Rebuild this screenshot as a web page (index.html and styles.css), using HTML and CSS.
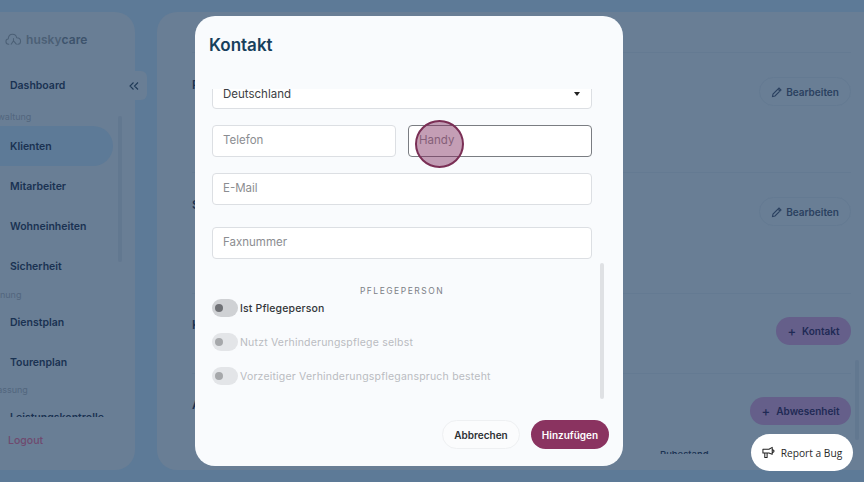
FILE: index.html
```html
<!DOCTYPE html>
<html lang="de">
<head>
<meta charset="utf-8">
<title>Kontakt</title>
<link rel="stylesheet" href="styles.css">
</head>
<body>
<div class="app">
  <aside class="sidebar">
    <div class="logo">
      <svg class="logo-icon" viewBox="0 0 18 14" fill="none" stroke="#4c6076" stroke-width="1.1" stroke-linecap="round" stroke-linejoin="round"><path d="M4 12.5C2 12.5 1 11 1 9.6 1 8 2.2 7 3.4 7 3.6 4 5.6 2 8 2c2.300 0 4 1.600 4.300 3.600C14.500 5.600 16.500 7 16.500 9.300c0 2-1.500 3.200-3 3.200"/><path d="M6.500 12.500 9 9l3 3.500M9 9V6.500"/></svg>
      <span class="logo-text">husky<b>care</b></span>
    </div>
    <a class="nav-item top">Dashboard</a>
    <button class="collapse" aria-label="Einklappen"><svg viewBox="0 0 10 8" fill="none" stroke="#1f3a57" stroke-width="1.100"><path d="M4.500.5 1 4l3.500 3.500M9 .5 5.500 4 9 7.500"/></svg></button>
    <nav class="nav-scroll">
      <div class="nav-label l1">Verwaltung</div>
      <a class="nav-item active">Klienten</a>
      <a class="nav-item">Mitarbeiter</a>
      <a class="nav-item">Wohneinheiten</a>
      <a class="nav-item">Sicherheit</a>
      <div class="nav-label l2">Planung</div>
      <a class="nav-item">Dienstplan</a>
      <a class="nav-item">Tourenplan</a>
      <div class="nav-label l3">Erfassung</div>
      <a class="nav-item">Leistungskontrolle</a>
    </nav>
    <span class="nav-thumb"></span>
    <a class="logout">Logout</a>
  </aside>

  <main class="main">
    <div class="main-scroll">
      <section class="sec s1">
        <h2>Persönliche Daten</h2>
        <button class="btn-ghost"><svg viewBox="0 0 12 12" fill="none" stroke="#2b4160" stroke-width="1.100"><path d="M1.500 10.500 2 8l6-6 2 2-6 6zM7 3l2 2"/></svg>Bearbeiten</button>
      </section>
      <section class="sec s2">
        <h2>Stammdaten</h2>
        <button class="btn-ghost"><svg viewBox="0 0 12 12" fill="none" stroke="#2b4160" stroke-width="1.100"><path d="M1.500 10.500 2 8l6-6 2 2-6 6zM7 3l2 2"/></svg>Bearbeiten</button>
      </section>
      <section class="sec s3">
        <h2>Kontakte</h2>
        <button class="btn-solid"><span class="plus">+</span>Kontakt</button>
      </section>
      <section class="sec s4">
        <h2>Abwesenheiten</h2>
        <button class="btn-solid"><span class="plus">+</span>Abwesenheit</button>
      </section>
      <div class="clipped-row">Ruhestand</div>
    </div>
    <span class="main-thumb"></span>
  </main>
</div>

<div class="modal">
  <h1 class="modal-title">Kontakt</h1>
  <div class="modal-body">
    <div class="field select"><span>Deutschland</span><i class="caret"></i></div>
    <div class="row">
      <div class="field ph">Telefon</div>
      <div class="field ph focus">Handy</div>
    </div>
    <div class="field ph email">E-Mail</div>
    <div class="field ph fax">Faxnummer</div>
    <div class="section-label">PFLEGEPERSON</div>
    <label class="toggle-row first"><span class="toggle"></span>Ist Pflegeperson</label>
    <label class="toggle-row off"><span class="toggle"></span>Nutzt Verhinderungspflege selbst</label>
    <label class="toggle-row off"><span class="toggle"></span>Vorzeitiger Verhinderungspfleganspruch besteht</label>
    <span class="modal-thumb"></span>
  </div>
  <div class="modal-foot">
    <button class="btn-cancel">Abbrechen</button>
    <button class="btn-add">Hinzufügen</button>
  </div>
</div>

<span class="click-dot"></span>

<button class="report"><svg viewBox="0 0 14 14" fill="none" stroke="#222" stroke-width="1.100" stroke-linejoin="round" stroke-linecap="round"><path d="M1 3.500h6.500L11 1.500v7.500L7.500 7.500H1zM3 7.500V12.500h2.500V7.500M11.500 4c1 .3 1.500.8 1.500 1.500S12.500 6.700 11.500 7"/></svg>Report a Bug</button>
</body>
</html>
```
FILE: styles.css
```css
* { box-sizing: border-box; }
html, body { margin: 0; height: 482px; overflow: hidden; }
body { background: #5d7a97; font-family: "Inter", "Liberation Sans", sans-serif; position: relative; }
button { font-family: inherit; border: 0; padding: 0; cursor: default; }

.app { display: flex; gap: 22px; padding-top: 12px; height: 470px; }

.sidebar { position: relative; width: 135px; flex: none; background: #697e95; border-radius: 0 20px 20px 0; display: flex; flex-direction: column; }
.logo { display: flex; align-items: center; gap: 4px; height: 56px; padding: 0 0 2px 5px; }
.logo-icon { width: 17px; height: 14px; }
.logo-text { font-size: 12px; font-weight: 600; color: #4c6076; letter-spacing: .1px; }
.logo-text b { font-weight: 600; color: #3d536c; }
.nav-item { display: flex; align-items: center; height: 40px; padding-left: 10px; font-size: 10.500px; font-weight: 600; color: #1a3252; width: 113px; }
.nav-item.top { height: 34px; }
.nav-item.active { background: #5d7a97; border-radius: 0 20px 20px 0; }
.nav-scroll { height: 315px; padding-top: 7px; overflow: hidden; display: flex; flex-direction: column; }
.nav-scroll .nav-item { flex: none; }
.nav-label { flex: none; font-size: 9px; line-height: 15px; color: #52667e; }
.nav-label.l1 { margin-left: -17px; height: 17px; }
.nav-label.l2 { margin-left: -13px; height: 15px; margin-top: 1px; }
.nav-label.l3 { margin-left: -15px; height: 15px; margin-top: 0; }
.collapse { position: absolute; left: 127px; top: 59px; width: 20px; height: 29px; background: #697e95; border-radius: 0 6px 6px 0; display: flex; align-items: center; justify-content: flex-start; padding-left: 2px; }
.collapse svg { width: 10px; height: 8px; }
.nav-thumb { position: absolute; left: 118px; top: 104px; width: 4px; height: 146px; background: #627890; border-radius: 2px; }
.logout { margin-top: 17px; padding-left: 8px; font-size: 10.500px; font-weight: 500; color: #6f4a6f; }

.main { position: relative; flex: 1; background: #697e95; border-radius: 20px 0 0 20px; }
.main-scroll { height: 442px; overflow: hidden; padding: 40px 13px 0 35px; }
.sec { display: flex; justify-content: space-between; align-items: flex-start; border-top: 1px solid #647a92; }
.sec h2 { margin: 0; font-size: 12px; font-weight: 600; color: #1a3252; }
.s1 { height: 120px; padding-top: 24px; }
.s2 { height: 121px; padding-top: 24px; }
.s3 { height: 80px; padding-top: 23px; }
.s4 { height: 70px; padding-top: 23px; }
.btn-ghost { display: flex; align-items: center; justify-content: center; gap: 3px; width: 92px; height: 29px; border: 1px solid #647a92; border-radius: 15px; background: transparent; font-size: 10px; font-weight: 600; color: #2b4160; }
.btn-ghost svg { width: 12px; height: 12px; }
.btn-solid { display: flex; align-items: center; justify-content: center; gap: 6px; height: 28px; padding: 0 11.500px; border-radius: 14px; background: #655f8a; font-size: 10px; font-weight: 600; color: #1f2a55; }
.plus { font-size: 13px; font-weight: 500; line-height: 1; }
.clipped-row { margin-left: 468px; margin-top: 6px; font-size: 9.500px; font-weight: 500; color: #1a3252; }
.main-thumb { position: absolute; right: 5px; top: 348px; width: 4px; height: 80px; background: #627890; border-radius: 2px; }

.modal { position: absolute; left: 195px; top: 16px; width: 428px; height: 450px; background: #f9fbfd; border-radius: 20px; display: flex; flex-direction: column; }
.modal-title { margin: 0; height: 73px; padding: 19px 0 0 14px; font-size: 17px; line-height: 20px; font-weight: 600; color: #17405c; }
.modal-body { position: relative; height: 311px; overflow: hidden; padding: 0 31px 0 17px; }
.field { height: 32px; background: #fff; border: 1.500px solid #dcdfe3; border-radius: 4px; display: flex; align-items: center; padding: 0 0 2px 10px; font-size: 11.500px; color: #8b8d91; }
.select { justify-content: space-between; margin-top: -12px; padding: 1px 11px 0 10px; color: #3c4043; }
.caret { width: 0; height: 0; border: 3.500px solid transparent; border-top: 4px solid #222; border-bottom: 0; }
.row { display: flex; gap: 12px; margin-top: 16px; }
.row .field { flex: 1; }
.focus { border: 1px solid #7a7d82; }
.email { margin-top: 16px; }
.fax { margin-top: 22px; }
.section-label { margin-top: 26px; text-align: center; font-size: 8.500px; line-height: 12px; letter-spacing: 1.500px; color: #7c8086; }
.toggle-row { display: flex; align-items: center; gap: 2px; height: 18px; margin-top: 16px; font-size: 10.500px; letter-spacing: .15px; font-weight: 450; color: #33363a; }
.toggle-row.first { margin-top: 2px; }
.toggle { position: relative; width: 26px; height: 18px; border-radius: 9px; background: #cfd1d4; flex: none; }
.toggle::after { content: ""; position: absolute; left: 3px; top: 5px; width: 8px; height: 8px; border-radius: 50%; background: #6f7175; }
.off { color: #b9bcc1; font-weight: 400; letter-spacing: .2px; }
.off .toggle { background: #e3e5e8; }
.off .toggle::after { background: #a6a8ab; }
.modal-thumb { position: absolute; left: 405px; top: 174px; width: 4px; height: 136px; background: #dfe1e4; border-radius: 2px; }
.modal-foot { display: flex; justify-content: flex-end; align-items: center; gap: 11px; padding: 20px 14px 0 0; }
.btn-cancel { width: 78px; height: 29px; border-radius: 15px; background: #fbfcfd; border: 1px solid #eef0f2; font-size: 10px; font-weight: 600; color: #2d3033; }
.btn-add { width: 78px; height: 29px; border-radius: 15px; background: #8a3360; font-size: 10px; font-weight: 600; color: #fff; }

.click-dot { position: absolute; left: 415px; top: 120px; width: 49px; height: 48px; border-radius: 50%; border: 2px solid #7a2f55; background: rgba(125, 40, 90, .45); }

.report { position: absolute; left: 751px; top: 434px; width: 102px; height: 37px; border-radius: 19px; background: #fff; display: flex; align-items: center; justify-content: center; gap: 6px; font-family: "Open Sans", sans-serif; font-size: 10.200px; color: #2a2a2a; }
.report svg { width: 13px; height: 13px; }
```
